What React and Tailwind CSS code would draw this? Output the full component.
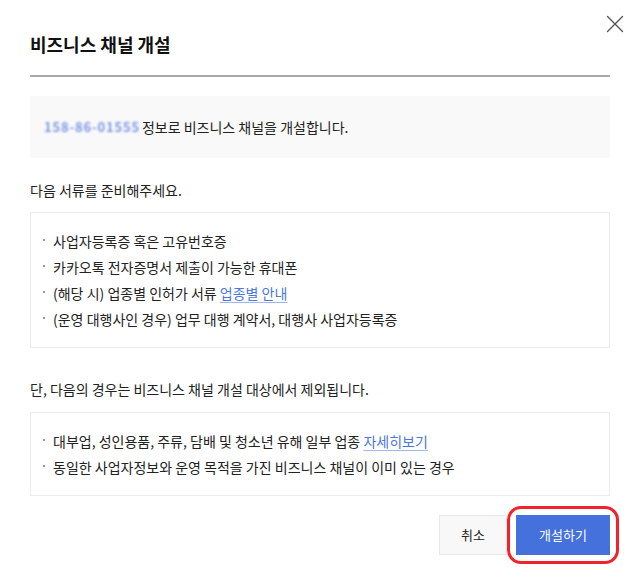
import { X } from "lucide-react";

const docs = [
  { text: "사업자등록증 혹은 고유번호증" },
  { text: "카카오톡 전자증명서 제출이 가능한 휴대폰" },
  { text: "(해당 시) 업종별 인허가 서류 ", link: "업종별 안내" },
  { text: "(운영 대행사인 경우) 업무 대행 계약서, 대행사 사업자등록증" },
];

const excluded = [
  { text: "대부업, 성인용품, 주류, 담배 및 청소년 유해 일부 업종 ", link: "자세히보기" },
  { text: "동일한 사업자정보와 운영 목적을 가진 비즈니스 채널이 이미 있는 경우" },
];

function BulletBox({ items }) {
  return (
    <div className="border border-[#ececec] py-[15px] pl-[12px] pr-4">
      {items.map((item, i) => (
        <div key={i} className="flex h-[26px] items-center">
          <span className="flex w-[10px] -translate-y-[1px]">
            <span className="h-[2px] w-[2px] rounded-full bg-[#777]" />
          </span>
          <span>
            {item.text}
            {item.link && (
              <a href="#" className="text-[#4a78e0] underline decoration-[#9fb6ee] underline-offset-[3px]">
                {item.link}
              </a>
            )}
          </span>
        </div>
      ))}
    </div>
  );
}

export default function App() {
  return (
    <div className="relative h-[586px] w-[640px] bg-white text-[14px] text-[#222] font-['Noto_Sans_CJK_KR','Noto_Sans',sans-serif]">
      <button className="absolute right-[10px] top-[9px] text-[#555]">
        <X size={30} strokeWidth={1.1} />
      </button>

      <div className="px-[30px]">
        <div className="border-b-2 border-[#a8a8a8] pb-[19px] pt-[32px]">
          <h1 className="text-[18px] font-bold leading-[24px] text-[#111]">비즈니스 채널 개설</h1>
        </div>

        <div className="mt-[19px] flex h-[62px] items-center bg-[#f9f9f9] px-[14px]">
          <span className="mr-[2px] select-none text-[13px] font-bold tracking-[0.8px] text-[#7d98e4] blur-[1.2px]">158-86-01555</span>
          <span>정보로 비즈니스 채널을 개설합니다.</span>
        </div>

        <p className="mt-[22px] leading-[20px]">다음 서류를 준비해주세요.</p>
        <div className="mt-[12px]">
          <BulletBox items={docs} />
        </div>

        <p className="mt-[31px] leading-[20px]">단, 다음의 경우는 비즈니스 채널 개설 대상에서 제외됩니다.</p>
        <div className="mt-[13px]">
          <BulletBox items={excluded} />
        </div>

        <div className="mt-[19px] flex justify-end gap-[9px]">
          <button className="h-[40px] w-[68px] border border-[#e8e8e8] bg-[#f8f8f8] text-[13px] text-[#222]">
            취소
          </button>
          <div className="relative">
            <button className="h-[40px] w-[94px] bg-[#4471dc] text-[13px] text-white">개설하기</button>
            <div className="pointer-events-none absolute -inset-[9px] rounded-[14px] border-[3px] border-[#f2222b]" />
          </div>
        </div>
      </div>
    </div>
  );
}
